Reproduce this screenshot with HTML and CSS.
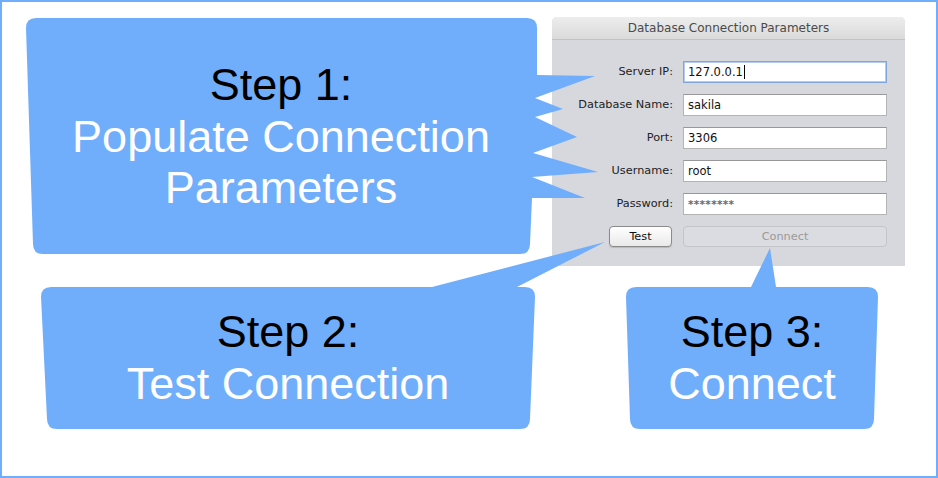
FILE: index.html
```html
<!DOCTYPE html>
<html lang="en">
<head>
  <meta charset="UTF-8">
  <meta name="viewport" content="width=device-width, initial-scale=1.0">
  <title>Database Connection Steps</title>
  <link rel="stylesheet" href="styles.css">
</head>
<body>
  <div class="frame">
    <div class="dialog">
      <div class="title-bar">Database Connection Parameters</div>
      <div class="form">
        <span class="label">Server IP:</span>
        <div class="field focused">127.0.0.1<span class="caret"></span></div>

        <span class="label">Database Name:</span>
        <div class="field">sakila</div>

        <span class="label">Port:</span>
        <div class="field">3306</div>

        <span class="label">Username:</span>
        <div class="field">root</div>

        <span class="label">Password:</span>
        <div class="field secret">********</div>

        <div class="btn-cell"><button class="btn">Test</button></div>
        <button class="btn wide" disabled>Connect</button>
      </div>
    </div>

    <!-- callouts drawn over the dialog -->
    <svg class="callouts" width="938" height="478" viewBox="0 0 938 478">
      <path class="bubble" d="M36,18 L527,18 Q537,18 537,28 L537,75 L595,76 L535,98 L563,109 L535,117 L577,137 L533,153 L598,172 L532,177 L585,198 L532,198 L530,244 Q530,254 520,254 L43,254 Q33,254 33,244 L26,28 Q26,18 36,18 Z"/>
      <path class="bubble" d="M51,287 L432,287 L605,242 L517,287 L525,287 Q535,287 535,297 L530,419 Q530,429 520,429 L57,429 Q47,429 47,419 L41,297 Q41,287 51,287 Z"/>
      <path class="bubble" d="M636,287 L751,287 L770,248 L776,287 L868,287 Q878,287 878,297 L874,419 Q874,429 864,429 L640,429 Q630,429 630,419 L626,297 Q626,287 636,287 Z"/>

      <text class="step" x="281" y="100">Step 1:</text>
      <text class="desc" x="281" y="152">Populate Connection</text>
      <text class="desc" x="281" y="203">Parameters</text>

      <text class="step" x="288" y="347">Step 2:</text>
      <text class="desc" x="288" y="399">Test Connection</text>

      <text class="step" x="752" y="347">Step 3:</text>
      <text class="desc" x="752" y="399">Connect</text>
    </svg>
  </div>
</body>
</html>
```

FILE: styles.css
```css
body {
  margin: 0;
  background-color: #fff;
  font-family: 'DejaVu Sans', sans-serif;
}

.frame {
  position: relative;
  width: 938px;
  height: 478px;
  box-sizing: border-box;
  padding: 17px 0 0 552px;
  box-shadow: inset 0 0 0 2px #70adfb;
  overflow: hidden;
}

.dialog {
  width: 353px;
  height: 249px;
  background-color: #d6d8de;
  border-radius: 5px 5px 0 0;
  overflow: hidden;
}

.title-bar {
  height: 23px;
  box-sizing: border-box;
  border-bottom: 1px solid #c3c3c3;
  background: linear-gradient(#ededed, #dadada);
  color: #4a4a4a;
  font-size: 12px;
  line-height: 23px;
  text-align: center;
}

.form {
  display: grid;
  grid-template-columns: 121px 204px;
  grid-auto-rows: 22px;
  column-gap: 10px;
  row-gap: 11px;
  padding: 21px 18px 18px 0;
}

.label {
  font-size: 11.3px;
  color: #222;
  text-align: right;
  line-height: 22px;
}

.field {
  background-color: #fff;
  border: 1px solid #b4b4b4;
  border-top-color: #989898;
  box-sizing: border-box;
  padding: 0 4px;
  font-size: 11.5px;
  line-height: 20px;
  color: #111;
  white-space: nowrap;
}

.field.focused {
  border: 1px solid #7ea6dc;
  box-shadow: inset 0 0 0 1px #b3ccef;
}

.caret {
  display: inline-block;
  width: 1px;
  height: 14px;
  margin-left: 1px;
  background-color: #000;
  vertical-align: -3px;
}

.field.secret {
  color: #6a6a6a;
  font-size: 10.5px;
  font-weight: bold;
  letter-spacing: 0.3px;
}

.btn-cell {
  display: flex;
  justify-content: flex-end;
  padding-right: 1px;
}

.btn {
  width: 63px;
  height: 21px;
  padding: 0;
  border: 1px solid #8a8a8a;
  border-radius: 4px;
  background: linear-gradient(#ffffff, #e9e9e9);
  font-family: 'DejaVu Sans', sans-serif;
  font-size: 11.3px;
  color: #111;
  box-shadow: 0 1px 1px rgba(0, 0, 0, 0.15);
}

.btn.wide {
  width: 100%;
  background: #dadce1;
  border-color: #c2c4c9;
  color: #9a9a9a;
  box-shadow: none;
}

.callouts {
  position: absolute;
  top: 0;
  left: 0;
  pointer-events: none;
}

.bubble {
  fill: #70aefc;
}

.step, .desc {
  font-family: 'Liberation Sans', Arial, sans-serif;
  font-size: 45px;
  text-anchor: middle;
}

.step {
  fill: #000;
}

.desc {
  fill: #fff;
}
```
